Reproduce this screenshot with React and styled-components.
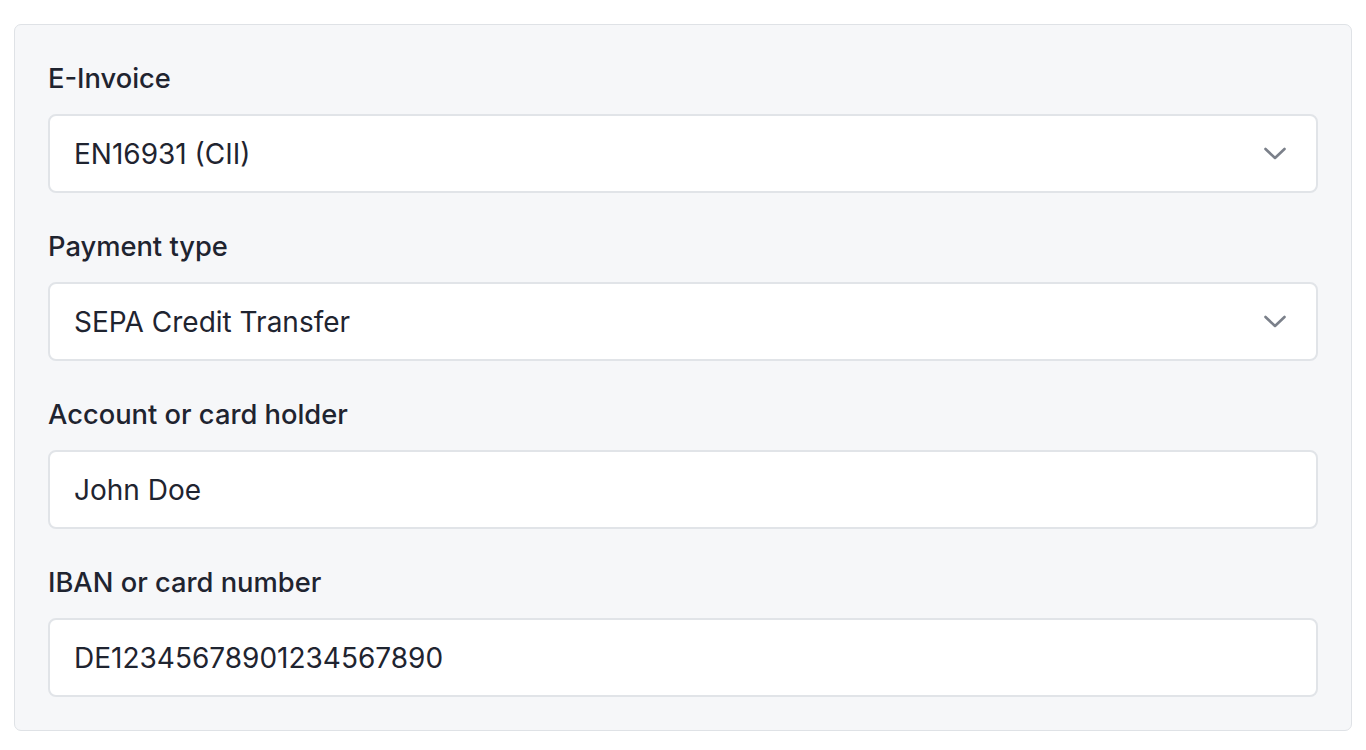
import React from "react";
import styled, { createGlobalStyle } from "styled-components";

const Global = createGlobalStyle`
  html, body { margin: 0; padding: 0; background: #ffffff; }
  body { font-family: Inter, "Noto Sans", "Liberation Sans", sans-serif; -webkit-font-smoothing: antialiased; }
  * { box-sizing: border-box; }
`;

const Page = styled.div`
  padding: 24px 14px 19px 14px;
`;

const Card = styled.div`
  background: #f6f7f9;
  border: 1px solid #dfe2e6;
  border-radius: 7px;
  padding: 32px 33px 33px 33px;
  display: flex;
  flex-direction: column;
  gap: 32px;
`;

const Field = styled.div`
  display: flex;
  flex-direction: column;
  gap: 17px;
`;

const Label = styled.label`
  padding-top: 4px;
  font-size: 27.3px;
  line-height: 36px;
  font-weight: 500;
  color: #1f2430;
`;

const Box = styled.div`
  height: 79px;
  background: #ffffff;
  border: 2px solid #e1e4e8;
  border-radius: 8px;
  display: flex;
  align-items: center;
  justify-content: space-between;
  padding: 0 30px 0 24px;
  font-size: 28px;
  font-weight: 400;
  color: #1f2430;
`;

const Chevron = () => (
  <svg width="22" height="14" viewBox="0 0 22 14" fill="none">
    <path d="M1.5 2l9.5 9 9.5-9" stroke="#7b808a" strokeWidth="2.6" strokeLinecap="round" strokeLinejoin="round" />
  </svg>
);

const fields = [
  { label: "E-Invoice", value: "EN16931 (CII)", select: true },
  { label: "Payment type", value: "SEPA Credit Transfer", select: true },
  { label: "Account or card holder", value: "John Doe" },
  { label: "IBAN or card number", value: "DE12345678901234567890" },
];

export default function App() {
  return (
    <>
      <Global />
      <Page>
        <Card>
          {fields.map((f) => (
            <Field key={f.label}>
              <Label>{f.label}</Label>
              <Box>
                <span>{f.value}</span>
                {f.select && <Chevron />}
              </Box>
            </Field>
          ))}
        </Card>
      </Page>
    </>
  );
}
